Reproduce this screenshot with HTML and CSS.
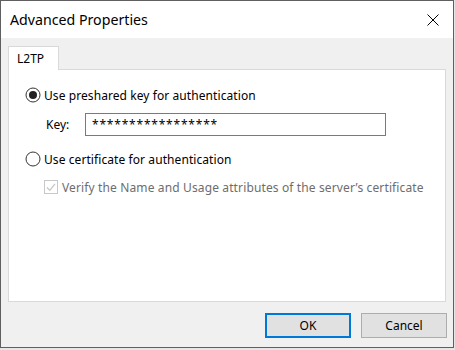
FILE: index.html
```html
<!DOCTYPE html>
<html>
<head>
<meta charset="utf-8">
<link rel="stylesheet" href="styles.css">
</head>
<body>
<div class="window">
  <div class="titlebar">
    <span class="title">Advanced Properties</span>
    <svg class="close" width="12" height="12" viewBox="0 0 12 12"><path d="M0.5 0.5 L11.5 11.5 M11.5 0.5 L0.5 11.5" stroke="#000" stroke-width="1"/></svg>
  </div>
  <div class="body">
    <div class="tabs"><div class="tab">L2TP</div></div>
    <div class="panel">
      <div class="row r1">
        <svg class="radio" width="16" height="16" viewBox="0 0 16 16"><circle cx="8" cy="8" r="7" fill="#fff" stroke="#333" stroke-width="1"/><circle cx="8" cy="8" r="4" fill="#222"/></svg>
        <span class="label">Use preshared key for authentication</span>
      </div>
      <div class="row keyrow">
        <span class="keylabel">Key:</span>
        <div class="input">*****************</div>
      </div>
      <div class="row r2">
        <svg class="radio" width="16" height="16" viewBox="0 0 16 16"><circle cx="8" cy="8" r="7" fill="#fff" stroke="#333" stroke-width="1"/></svg>
        <span class="label">Use certificate for authentication</span>
      </div>
      <div class="row chkrow">
        <svg class="chk" width="14" height="14" viewBox="0 0 14 14"><rect x="0.5" y="0.5" width="13" height="13" fill="#fff" stroke="#c8c8c8"/><path d="M3 7.5 L5.8 10.3 L11 3.8" fill="none" stroke="#c4c4c4" stroke-width="1.2"/></svg>
        <span class="label disabled">Verify the Name and Usage attributes of the server’s certificate</span>
      </div>
    </div>
    <div class="buttons">
      <div class="btn ok">OK</div>
      <div class="btn">Cancel</div>
    </div>
  </div>
</div>
</body>
</html>
```
FILE: styles.css
```css
html, body {
  margin: 0;
  padding: 0;
  background: #e6e6e6;
}
body {
  width: 455px;
  height: 350px;
  overflow: hidden;
  font-family: "Noto Sans", "Open Sans", sans-serif;
  font-size: 12px;
  color: #000;
}
.window {
  box-sizing: border-box;
  width: 454px;
  height: 348px;
  border: 1px solid #5f5f5f;
  display: flex;
  flex-direction: column;
  background: #f0f0f0;
}
.titlebar {
  height: 37px;
  background: #fff;
  display: flex;
  align-items: center;
  justify-content: space-between;
  padding: 0 14px 0 9px;
  flex: none;
}
.title {
  font-size: 14.2px;
  margin-top: -1px;
}
.close {
  margin-top: 1px;
}
.body {
  flex: 1;
  display: flex;
  flex-direction: column;
  padding: 8px 6px 0 7px;
}
.tabs {
  display: flex;
  height: 23px;
  position: relative;
  z-index: 1;
}
.tab {
  box-sizing: border-box;
  width: 51px;
  height: 24px;
  background: #fff;
  border: 1px solid #d9d9d9;
  border-bottom: none;
  padding: 4px 0 0 8px;
  line-height: 15px;
}
.panel {
  box-sizing: border-box;
  width: 438px;
  height: 233px;
  background: #fff;
  border: 1px solid #d9d9d9;
  padding: 17px 0 0 16px;
  display: flex;
  flex-direction: column;
}
.row {
  display: flex;
  align-items: center;
}
.r1, .r2 {
  height: 16px;
}
.label {
  letter-spacing: 0.08px;
}
.radio {
  flex: none;
  margin-right: 3px;
}
.keyrow {
  margin-top: 10px;
  height: 23px;
  padding-left: 21px;
}
.keylabel {
  width: 39px;
}
.input {
  box-sizing: border-box;
  width: 301px;
  height: 23px;
  border: 1px solid #7a7a7a;
  padding: 2px 0 0 6px;
  font-size: 12px;
  letter-spacing: 0.8px;
}
.r2 {
  margin-top: 15px;
}
.chkrow {
  margin-top: 12px;
  height: 16px;
  padding-left: 19px;
}
.chk {
  flex: none;
  margin-right: 4px;
}
.disabled {
  color: #6d6d6d;
  letter-spacing: 0.13px;
}
.buttons {
  display: flex;
  justify-content: flex-end;
  gap: 10px;
  margin-top: 11px;
}
.btn {
  box-sizing: border-box;
  width: 86px;
  height: 25px;
  background: #e1e1e1;
  border: 1px solid #adadad;
  display: flex;
  align-items: center;
  justify-content: center;
}
.btn.ok {
  border: 2px solid #0078d7;
}
```
